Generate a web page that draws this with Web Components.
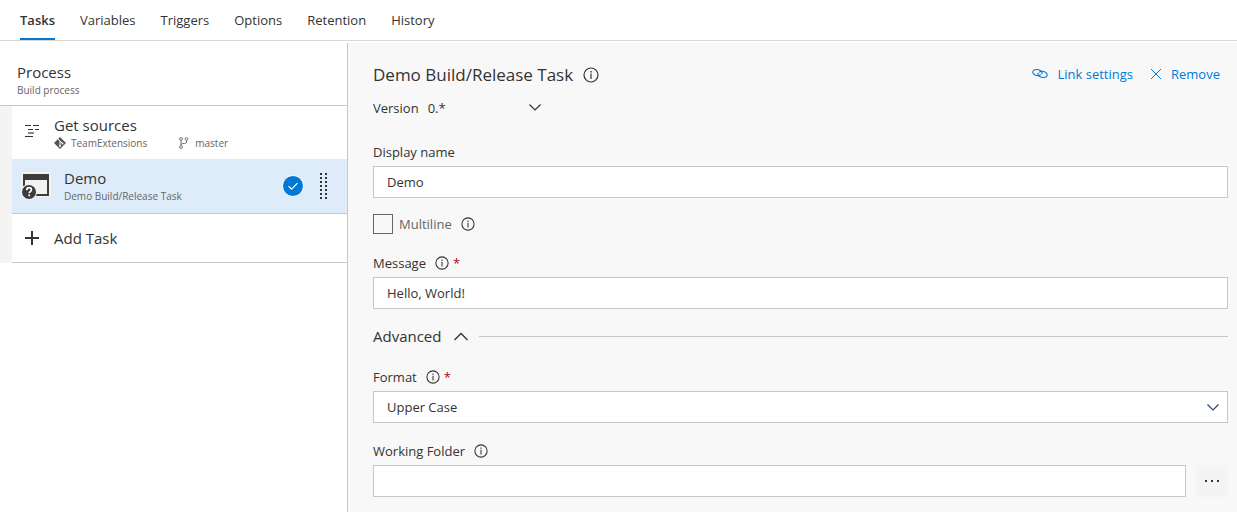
<!DOCTYPE html>
<html lang="en">
<head>
<meta charset="utf-8">
<title>Build definition - Tasks</title>
<style>
  :root {
    --text: #333;
    --muted: #666;
    --line: #c8c8c8;
    --accent: #0078d7;
    --panel: #f8f8f8;
  }
  html, body { height: 100%; }
  body { margin: 0; background: #fff; color: var(--text); font: 13px/20px "Open Sans", "Noto Sans", sans-serif; }
</style>
</head>
<body>
<build-editor></build-editor>
<script>
const define = (name, html, setup) => {
  const template = document.createElement('template');
  template.innerHTML = html;
  customElements.define(name, class extends HTMLElement {
    connectedCallback() {
      if (this.shadowRoot) return;
      this.attachShadow({ mode: 'open' }).append(template.content.cloneNode(true));
      if (setup) setup(this, this.shadowRoot);
    }
  });
};

const icons = {
  info: [16, '<circle cx="8" cy="8" r="7" fill="none" stroke="#333" stroke-width="1.2"/><path d="M7.3 4h1.4v1.5H7.3zM7.4 6.6h1.2v5.4H7.4z" fill="#333"/>'],
  down: [14, '<path d="M1.5 4.5 7 10l5.500-5.500" fill="none" stroke="currentColor" stroke-width="1.200"/>'],
  up: [16, '<path d="M1.500 12 8 5.500l6.500 6.500" fill="none" stroke="currentColor" stroke-width="1.300"/>'],
  link: [16, '<g fill="none" stroke="currentColor" stroke-width="1.100"><path d="M8.800 8.600C7.600 9.900 4.800 10 3 9 .7 7.800.2 5.600 1.600 4.400 3 3.200 6.200 3.300 8.200 4.500c1.700 1 2.300 2.600 1.500 3.700"/><path d="M7.200 6.400C8.400 5.100 11.200 5 13 6c2.300 1.200 2.800 3.400 1.400 4.600-1.400 1.200-4.600 1.100-6.600-.1C6.100 9.500 5.500 7.900 6.300 6.800"/></g>'],
  close: [12, '<path d="M1 1l10 10M11 1 1 11" stroke="currentColor" stroke-width="1"/>'],
  plus: [14, '<path d="M7 0v14M0 7h14" stroke="#333" stroke-width="2"/>'],
  sources: [18, '<path d="M0 1h6v1H0zM8 1h6v1H8zM3 5h5v1H3zM10 5h4v1h-4zM0 12h8v1H0z" fill="#333"/><path d="M3 8h6v2H3z" fill="#888"/>'],
  git: [12, '<path d="M6 0l6 6-6 6-6-6z" fill="#555"/><path d="M4 2l2 2v5M6 4l2.500 2.500" stroke="#fff" fill="none"/><circle cx="6" cy="9" r="1" fill="#fff"/><circle cx="8.500" cy="6.500" r="1" fill="#fff"/>'],
  branch: [12, '<g fill="none" stroke="#777"><circle cx="3" cy="2" r="1.400"/><circle cx="8.500" cy="2" r="1.400"/><circle cx="3" cy="10" r="1.400"/><path d="M3 3.500v5M8.500 3.500v1.500q0 1.500-2 1.500h-1.500q-2 0-2 1.500"/></g>'],
  task: [30, '<path d="M0 1h30v25H0z" fill="#f2f2f2"/><path d="M2 3h26v22H15v-2h11V9H4v6H2z" fill="#3c3c3c"/><circle cx="8" cy="21" r="8" fill="#f2f2f2"/><circle cx="8" cy="21" r="7" fill="#3c3c3c"/><path d="M5.800 19.200q0-2.500 2.300-2.500t2.300 2.100q0 1.200-1.300 1.900-.9.500-.9 1.600M8.200 23.500v1.800" fill="none" stroke="#fff" stroke-width="1.700"/>'],
  check: [22, '<circle cx="11" cy="11" r="10.500" fill="#0078d7" stroke="#fff"/><path d="M6.500 11.200l3 3 6-6" fill="none" stroke="#fff" stroke-width="1.200"/>'],
  grip: [28, Array.from({ length: 14 }, (_, i) => `<path d="M${i % 2 ? 15 : 10} ${(i >> 1) * 4 + 1}h2v2h-2z" fill="#333"/>`).join('')],
  more: [16, '<path d="M1 7h2v2H1zM7 7h2v2H7zM13 7h2v2h-2z" fill="#2b3350"/>']
};

define('app-icon', `<style>:host{display:inline-flex;flex:none} svg{display:block}</style>`, (host, root) => {
  const [box, body] = icons[host.getAttribute('name')];
  const size = host.getAttribute('size') || box;
  root.innerHTML += `<svg width="${size}" height="${size}" viewBox="0 0 ${box} ${box}" aria-hidden="true">${body}</svg>`;
});

define('tab-bar', `
<style>
  :host { display: block; border-bottom: 1px solid #d8d8d8; }
  nav { display: flex; gap: 25px; padding: 0 20px; }
  a { padding: 10px 0 8px; border-bottom: 2px solid transparent; color: inherit; text-decoration: none; }
  a[aria-current] { font-weight: 600; border-color: var(--accent); }
</style>
<nav>
  <a href="#tasks" aria-current="page">Tasks</a>
  <a href="#variables">Variables</a>
  <a href="#triggers">Triggers</a>
  <a href="#options">Options</a>
  <a href="#retention">Retention</a>
  <a href="#history">History</a>
</nav>`);

define('task-row', `
<style>
  :host { display: flex; align-items: center; box-sizing: border-box; padding: 0 9px 0 13px; min-height: 53px; }
  :host([selected]) { background: #deecf9; border-bottom: 1px solid var(--line); min-height: 55px; padding-left: 9px; }
  .lead { display: flex; flex: none; width: 29px; }
  :host([selected]) .lead { width: 43px; }
  .text { flex: 1; }
  .name { font-size: 15px; line-height: 20px; }
  .meta { display: flex; font-size: 10px; line-height: 16px; color: var(--muted); }
  .end { display: flex; align-items: center; gap: 6px; }
</style>
<div class="lead"><slot name="icon"></slot></div>
<div class="text"><div class="name"><slot></slot></div><div class="meta"><slot name="meta"></slot></div></div>
<div class="end"><slot name="end"></slot></div>`);

define('process-pane', `
<style>
  :host { display: block; background: #fff; border-right: 1px solid var(--line); }
  header { padding: 19px 17px 7px; border-bottom: 1px solid var(--line); }
  h2 { margin: 0; font-size: 15px; line-height: 20px; font-weight: 400; }
  p { margin: 0; font-size: 10px; line-height: 16px; color: var(--muted); }
  .list { border-left: 12px solid #f4f4f4; }
  .bit { display: flex; align-items: center; gap: 5px; margin-right: 31px; }
  button { display: flex; align-items: center; gap: 15px; width: 100%; height: 49px; padding: 0 13px; border: 0;
    border-bottom: 1px solid var(--line); background: none; color: inherit; font: inherit; font-size: 15px; }
</style>
<header><h2>Process</h2><p>Build process</p></header>
<div class="list">
  <task-row>
    <app-icon slot="icon" name="sources"></app-icon>Get sources
    <span slot="meta" class="bit"><app-icon name="git"></app-icon>TeamExtensions</span>
    <span slot="meta" class="bit"><app-icon name="branch"></app-icon>master</span>
  </task-row>
  <task-row selected>
    <app-icon slot="icon" name="task"></app-icon>Demo
    <span slot="meta">Demo Build/Release Task</span>
    <app-icon slot="end" name="check"></app-icon>
    <app-icon slot="end" name="grip"></app-icon>
  </task-row>
  <button type="button"><app-icon name="plus"></app-icon>Add Task</button>
</div>`);

define('form-field', `
<style>
  :host { display: block; }
  .head { display: flex; align-items: center; gap: 9px; margin-bottom: 4px; }
  .req { color: #b00020; margin-left: -5px; }
  .row { display: flex; gap: 10px; }
  .control { position: relative; flex: 1; display: flex; color: #2b4a6b; }
  input, select { flex: 1; min-width: 0; box-sizing: border-box; height: 32px; margin: 0; padding: 0 13px; border: 1px solid var(--line);
    border-radius: 0; background: #fff; color: var(--text); font: inherit; appearance: none; outline: 0; }
  .control app-icon { position: absolute; right: 8px; top: 9px; pointer-events: none; }
  button { width: 32px; height: 32px; padding: 0; border: 0; background: #f4f4f4; display: flex; align-items: center; justify-content: center; }
</style>
<div class="head"><label for="control"></label></div>
<div class="row"><div class="control"></div></div>`, (host, root) => {
  root.querySelector('label').textContent = host.getAttribute('label');
  const head = root.querySelector('.head');
  if (host.hasAttribute('info')) head.insertAdjacentHTML('beforeend', '<app-icon name="info" size="14"></app-icon>');
  if (host.hasAttribute('required')) head.insertAdjacentHTML('beforeend', '<span class="req">*</span>');
  const value = host.getAttribute('value') || '';
  root.querySelector('.control').innerHTML = host.hasAttribute('options')
    ? `<select id="control"><option>${value}</option></select><app-icon name="down"></app-icon>`
    : `<input id="control" type="text" value="${value}">`;
  if (host.hasAttribute('browse')) root.querySelector('.row').insertAdjacentHTML('beforeend', '<button type="button" aria-label="Browse"><app-icon name="more"></app-icon></button>');
});

define('task-details', `
<style>
  :host { display: block; background: var(--panel); padding: 20px 9px 15px 25px; }
  header { display: flex; align-items: center; height: 24px; }
  h1 { margin: 0 10px 0 0; font-size: 17px; line-height: 24px; font-weight: 400; }
  .actions { display: flex; gap: 17px; margin-left: auto; padding-right: 8px; }
  .actions a { display: flex; align-items: center; gap: 9px; color: var(--accent); text-decoration: none; line-height: 18px; padding-bottom: 2px; }
  .version { display: flex; align-items: center; gap: 9px; margin: 11px 0 24px; }
  .pick { position: relative; display: flex; width: 114px; }
  .pick select { width: 100%; height: 20px; padding: 0; border: 0; background: none; color: inherit; font: inherit; appearance: none; }
  .pick app-icon { position: absolute; right: 0; top: 2px; pointer-events: none; }
  .check { display: flex; align-items: center; height: 20px; margin: 16px 0 19px; color: var(--muted); }
  .check input { appearance: none; box-sizing: border-box; width: 20px; height: 20px; margin: 0 6px 0 0; border: 1px solid #666; }
  .check app-icon { margin-left: 9px; }
  .section { display: flex; align-items: center; gap: 10px; margin: 15px 0 19px; }
  .section button { display: flex; align-items: center; gap: 12px; height: 24px; padding: 0; border: 0; background: none; color: inherit; font: inherit; font-size: 15px; }
  .section hr { flex: 1; margin: 0; border: 0; border-top: 1px solid var(--line); }
  .last { margin-top: 18px; }
</style>
<header>
  <h1>Demo Build/Release Task</h1><app-icon name="info"></app-icon>
  <div class="actions">
    <a href="#link"><app-icon name="link"></app-icon>Link settings</a>
    <a href="#remove"><app-icon name="close"></app-icon>Remove</a>
  </div>
</header>
<div class="version">
  <label for="version">Version</label>
  <div class="pick"><select id="version"><option>0.*</option></select><app-icon name="down"></app-icon></div>
</div>
<form-field label="Display name" value="Demo"></form-field>
<div class="check"><input id="multi" type="checkbox"><label for="multi">Multiline</label><app-icon name="info" size="14"></app-icon></div>
<form-field label="Message" value="Hello, World!" info required></form-field>
<div class="section"><button type="button" aria-expanded="true">Advanced<app-icon name="up"></app-icon></button><hr></div>
<form-field label="Format" value="Upper Case" options info required></form-field>
<form-field class="last" label="Working Folder" info browse></form-field>`);

define('build-editor', `
<style>
  :host { display: flex; flex-direction: column; min-height: 100%; }
  main { flex: 1; display: grid; grid-template-columns: 348px minmax(0, 1fr); padding-top: 2px; }
</style>
<tab-bar></tab-bar>
<main><process-pane></process-pane><task-details></task-details></main>`);
</script>
</body>
</html>
